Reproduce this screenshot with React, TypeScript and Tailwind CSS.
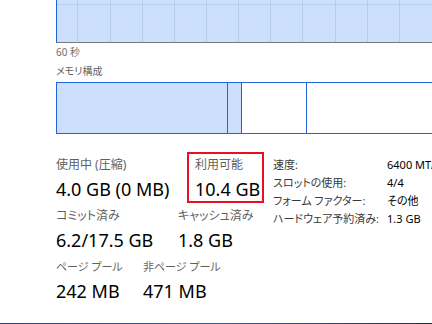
const GRID_X = [20, 53, 85, 117, 149, 181, 213, 245, 278, 310, 342];

const font = { fontFamily: '"Noto Sans", "Noto Sans CJK JP", sans-serif' };

function Stat({ label, value, labelCls = 'text-[12px]' }: { label: string; value: string; labelCls?: string }) {
    return (
        <div>
            <div className={`${labelCls} leading-[16px] text-[#5f5f5f] whitespace-nowrap [font-feature-settings:'palt']`}>{label}</div>
            <div className="mt-[4px] text-[18px] leading-[24px] text-black whitespace-nowrap">{value}</div>
        </div>
    );
}

const SPECS: [string, string][] = [
    ['速度:', '6400 MT/s'],
    ['スロットの使用:', '4/4'],
    ['フォーム ファクター:', 'その他'],
    ['ハードウェア予約済み:', '1.3 GB'],
];

export default function App() {
    return (
        <div className="w-[432px] h-[324px] bg-white overflow-hidden flex flex-col" style={font}>
            <div className="pl-[56px]">
                {/* Usage chart */}
                <div className="h-[43px] border-l border-b border-l-[#1a66d9] border-b-[#7a7a7a] bg-[#cce0fd]">
                    <svg width="376" height="42" className="block">
                        <line x1="0" y1="4.5" x2="376" y2="4.5" stroke="#b6cdee" strokeWidth="1" />
                        {GRID_X.map(x => (
                            <line key={x} x1={x + 0.5} y1="0" x2={x + 0.5} y2="42" stroke="#b6cdee" strokeWidth="1" />
                        ))}
                    </svg>
                </div>
                <div className="mt-[2px] text-[10px] leading-[14px] text-[#707070]">60 秒</div>
                <div className="mt-[5px] text-[10px] leading-[14px] text-[#5f5f5f] [font-feature-settings:'palt']">メモリ構成</div>

                {/* Memory composition */}
                <div className="mt-[4px] h-[52px] flex border-y border-l border-[#1f63d8]">
                    <div className="w-[171px] bg-[#cce0fd] border-r border-[#1f63d8]" />
                    <div className="w-[14px] bg-[#cce0fd] border-r border-[#1f63d8]" />
                    <div className="w-[65px] border-r border-[#1f63d8]" />
                    <div className="flex-1" />
                </div>

                {/* Stats */}
                <div className="mt-[18px] flex items-start">
                    <div className="w-[217px] shrink-0">
                        <div className="flex items-start">
                            <div className="w-[131px] shrink-0 pt-[5px]">
                                <Stat label="使用中 (圧縮)" value="4.0 GB (0 MB)" />
                            </div>
                            <div className="w-[77px] shrink-0 border-2 border-[#e81123] pt-[3px] pl-[6px]">
                                <Stat label="利用可能" value="10.4 GB" />
                            </div>
                        </div>
                        <div className="mt-[5px] flex">
                            <div className="w-[122px] shrink-0">
                                <Stat label="コミット済み" value="6.2/17.5 GB" />
                            </div>
                            <Stat label="キャッシュ済み" value="1.8 GB" />
                        </div>
                        <div className="mt-[7px] flex">
                            <div className="w-[87px] shrink-0">
                                <Stat label="ページ プール" value="242 MB" labelCls="text-[11px]" />
                            </div>
                            <Stat label="非ページ プール" value="471 MB" labelCls="text-[11px]" />
                        </div>
                    </div>
                    <div className="pt-[4px] grid grid-cols-[114px_auto] content-start text-[11px] leading-[18px] whitespace-nowrap [font-feature-settings:'palt']">
                        {SPECS.map(([k, v]) => (
                            <div key={k} className="contents">
                                <div className="text-[#3a3a3a]">{k}</div>
                                <div className="text-black">{v}</div>
                            </div>
                        ))}
                    </div>
                </div>
            </div>
            <div className="mt-auto h-px bg-gradient-to-r from-[#2a3f78] via-[#3a5a98] to-[#2b2b3a]" />
        </div>
    );
}
